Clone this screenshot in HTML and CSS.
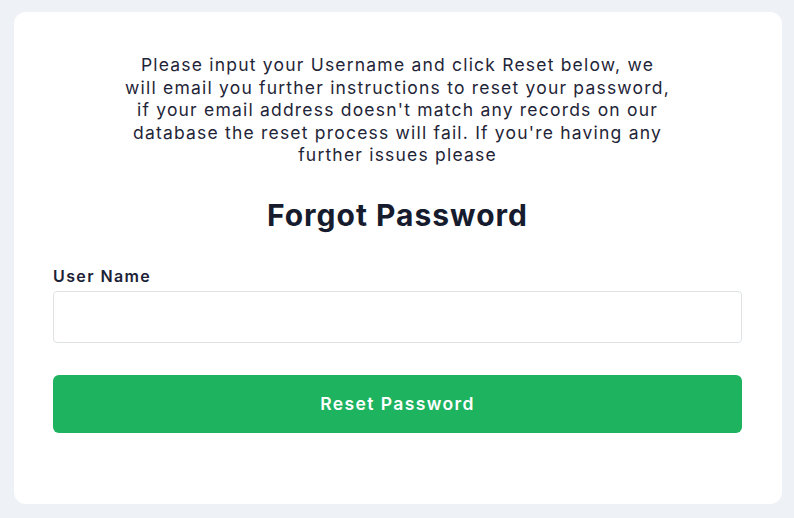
FILE: index.html
```html
<!DOCTYPE html>
<html lang="en">
<head>
<meta charset="utf-8">
<title>Forgot Password</title>
<link rel="stylesheet" href="styles.css">
</head>
<body>
<main class="page">
  <section class="card">
    <p class="intro">Please input your Username and click Reset below, we<br>will email you further instructions to reset your password,<br>if your email address doesn't match any records on our<br>database the reset process will fail. If you're having any<br>further issues please</p>
    <h1 class="title">Forgot Password</h1>
    <form class="form">
      <label class="label" for="username">User Name</label>
      <input class="input" id="username" type="text">
      <button class="button" type="button">Reset Password</button>
    </form>
  </section>
</main>
</body>
</html>
```

FILE: styles.css
```css
html, body {
  margin: 0;
  padding: 0;
  background: #eef2f6;
}
body {
  font-family: Inter, "DejaVu Sans", sans-serif;
  color: #1c2236;
}
.page {
  padding: 12px 12px 14px 14px;
  height: 518px;
  box-sizing: border-box;
}
.card {
  background: #ffffff;
  border-radius: 12px;
  height: 492px;
  box-sizing: border-box;
  padding: 42px 40px 0 39px;
}
.intro {
  margin: 0;
  text-align: center;
  font-size: 17.5px;
  line-height: 22.5px;
  letter-spacing: 1.2px;
  color: #1f2538;
}
.title {
  margin: 29px 0 0;
  text-align: center;
  font-size: 30px;
  line-height: 38px;
  font-weight: 700;
  letter-spacing: 1px;
  color: #161b2e;
}
.form {
  margin-top: 30px;
  display: flex;
  flex-direction: column;
}
.label {
  font-size: 16px;
  line-height: 24px;
  font-weight: 600;
  letter-spacing: 1.4px;
  color: #1c2236;
  margin-bottom: 3px;
}
.input {
  height: 52px;
  box-sizing: border-box;
  border: 1px solid #dfe3e6;
  border-radius: 4px;
  font: inherit;
  padding: 0 14px;
  outline: none;
}
.button {
  margin-top: 32px;
  height: 58px;
  border: none;
  border-radius: 6px;
  background: #1db35f;
  color: #ffffff;
  font-family: inherit;
  font-size: 17.5px;
  font-weight: 600;
  letter-spacing: 1.4px;
  cursor: pointer;
}
```
